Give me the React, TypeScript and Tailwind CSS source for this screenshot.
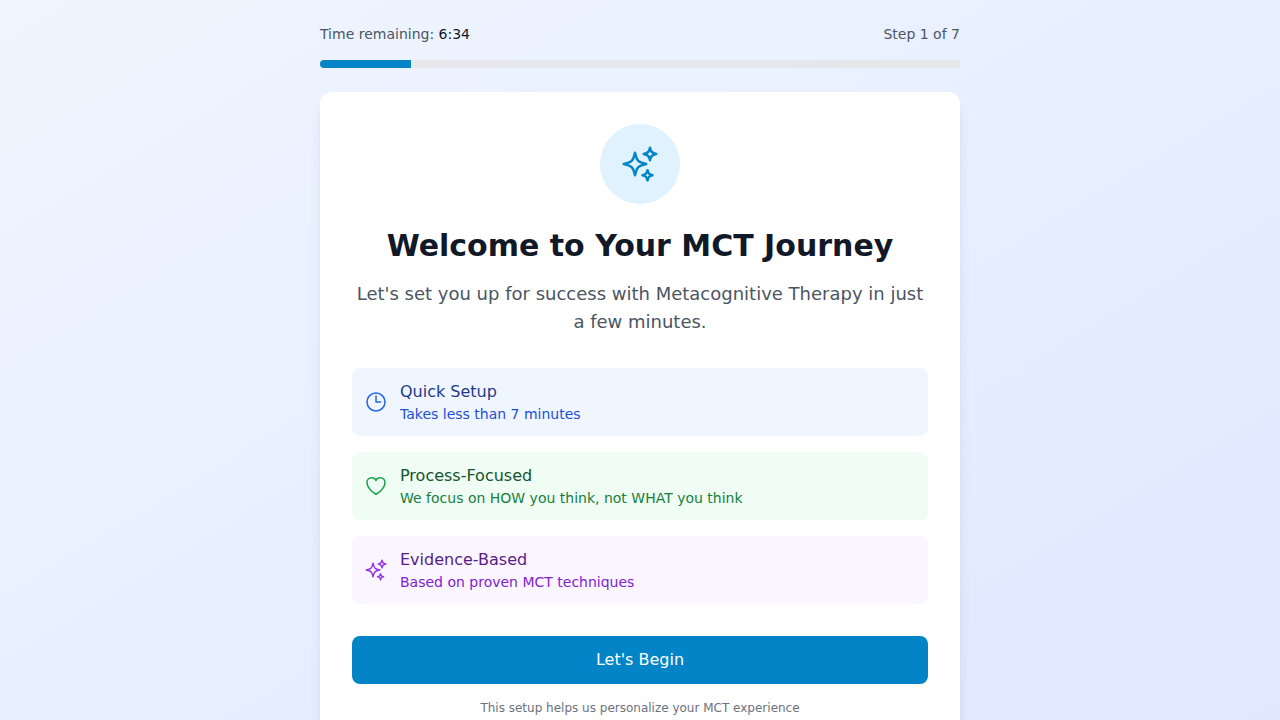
import { useState } from 'react';
import { HiOutlineClock, HiOutlineHeart, HiOutlineSparkles } from 'react-icons/hi2';

const features = [
  {
    title: 'Quick Setup',
    text: 'Takes less than 7 minutes',
    Icon: HiOutlineClock,
    box: 'bg-[#eff6ff]',
    icon: 'text-[#2563eb]',
    heading: 'text-[#1e3a8a]',
    body: 'text-[#1d4ed8]',
  },
  {
    title: 'Process-Focused',
    text: 'We focus on HOW you think, not WHAT you think',
    Icon: HiOutlineHeart,
    box: 'bg-[#f0fdf4]',
    icon: 'text-[#16a34a]',
    heading: 'text-[#14532d]',
    body: 'text-[#15803d]',
  },
  {
    title: 'Evidence-Based',
    text: 'Based on proven MCT techniques',
    Icon: HiOutlineSparkles,
    box: 'bg-[#faf5ff]',
    icon: 'text-[#9333ea]',
    heading: 'text-[#581c87]',
    body: 'text-[#7e22ce]',
  },
];

function Progress({ step, total }: { step: number; total: number }) {
  return (
    <div className="mb-6">
      <div className="mb-4 flex items-center justify-between text-sm text-[#4b5563]">
        <div>
          Time remaining: <span className="font-medium text-[#111827]">6:34</span>
        </div>
        <div>
          Step {step} of {total}
        </div>
      </div>
      <div className="h-2 w-full overflow-hidden rounded-full bg-[#e5e7eb]">
        <div className="h-2 bg-[#0284c7]" style={{ width: `${(step / total) * 100}%` }} />
      </div>
    </div>
  );
}

export default function App() {
  const [step, setStep] = useState(1);
  return (
    <div className="h-screen overflow-hidden font-['DejaVu_Sans',sans-serif]">
      <div className="min-h-screen bg-[linear-gradient(to_bottom_right,#eff6ff,#e0e7ff)] py-6">
        <div className="mx-auto max-w-[640px]">
          <Progress step={step} total={7} />
          <div className="rounded-xl bg-white p-8 text-center shadow-lg">
            <div className="mx-auto mb-6 flex size-20 items-center justify-center rounded-full bg-[#e0f2fe]">
              <HiOutlineSparkles className="size-10 text-[#0284c7]" />
            </div>
            <h1 className="mb-4 text-3xl font-bold text-[#111827]">Welcome to Your MCT Journey</h1>
            <p className="mb-8 text-lg text-[#4b5563]">
              Let's set you up for success with Metacognitive Therapy in just a few minutes.
            </p>
            <div className="mb-8 space-y-4">
              {features.map(({ title, text, Icon, box, icon, heading, body }) => (
                <div key={title} className={`flex items-center gap-3 rounded-lg p-3 text-left ${box}`}>
                  <Icon className={`size-6 shrink-0 ${icon}`} />
                  <div>
                    <div className={`font-medium ${heading}`}>{title}</div>
                    <div className={`text-sm ${body}`}>{text}</div>
                  </div>
                </div>
              ))}
            </div>
            <button
              onClick={() => setStep(Math.min(step + 1, 7))}
              className="h-12 w-full rounded-lg bg-[#0284c7] font-medium text-white"
            >
              Let's Begin
            </button>
            <p className="mt-4 text-xs text-[#6b7280]">This setup helps us personalize your MCT experience</p>
          </div>
        </div>
      </div>
    </div>
  );
}
